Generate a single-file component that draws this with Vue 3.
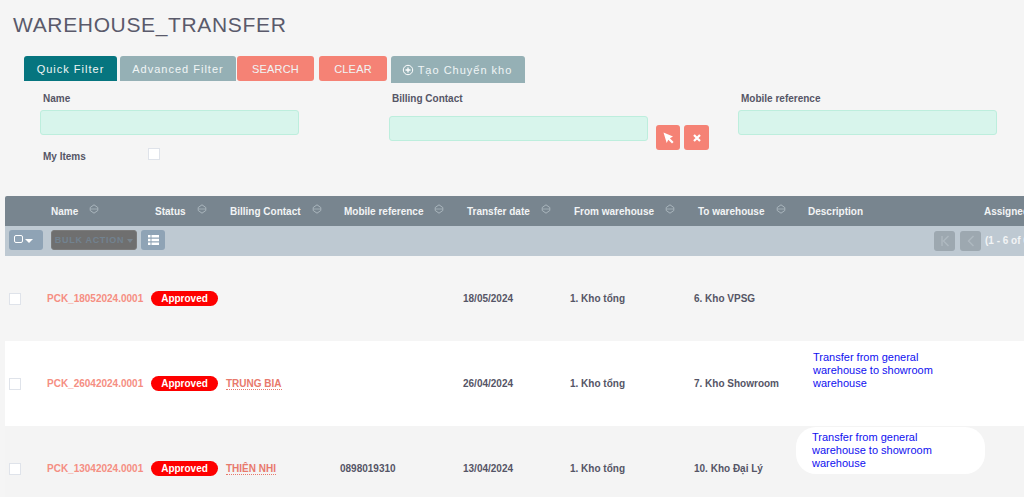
<template>
  <div class="page">
    <h1 class="title">WAREHOUSE_TRANSFER</h1>

    <div class="tabs">
      <a class="tab teal quick">Quick Filter</a>
      <a class="tab grey advanced">Advanced Filter</a>
      <a class="tab salmon search">SEARCH</a>
      <a class="tab salmon clear">CLEAR</a>
      <a class="tab grey create">
        <svg width="12" height="12" viewBox="0 0 12 12">
          <circle cx="6" cy="6" r="4.7" fill="none" stroke="#fff" stroke-width="1" />
          <path d="M6 3.5v5M3.5 6h5" stroke="#fff" stroke-width="1.3" />
        </svg>
        Tạo Chuyển kho
      </a>
    </div>

    <div class="filters">
      <div class="field">
        <label>Name</label>
        <input type="text" />
        <div class="my-items">
          <label>My Items</label>
          <span class="check"></span>
        </div>
      </div>
      <div class="field">
        <label>Billing Contact</label>
        <div class="contact-row">
          <input type="text" />
          <button class="mini">
            <svg width="14" height="14" viewBox="0 0 14 14"><path d="M2.5 1.5 12 5.6 8.9 7.2 12.6 11l-1.6 1.6-3.7-3.8-1.6 3.2z" fill="#fff" /></svg>
          </button>
          <button class="mini">
            <svg width="10" height="10" viewBox="0 0 10 10"><path d="M2 2l6 6M8 2l-6 6" stroke="#fff" stroke-width="2.2" /></svg>
          </button>
        </div>
      </div>
      <div class="field">
        <label>Mobile reference</label>
        <input type="text" />
      </div>
    </div>

    <div class="table">
      <div class="head cols">
        <div v-for="c in columns" :key="c.label" class="th" :class="{ pull: c.pull }">
          {{ c.label }}
          <svg v-if="c.sort" class="sort" width="10" height="10" viewBox="0 0 10 10">
            <path d="M5 .8 8.8 3.5v3L5 9.2 1.2 6.5v-3z" fill="none" stroke="#aab6bd" stroke-width="1" />
            <path d="M1.5 5h7" stroke="#aab6bd" stroke-width="0.8" />
          </svg>
        </div>
      </div>

      <div class="toolbar">
        <button class="tool select">
          <span class="box"></span>
          <span class="caret"></span>
        </button>
        <button class="tool bulk">BULK ACTION<span class="caret dim"></span></button>
        <button class="tool list">
          <svg width="11" height="10" viewBox="0 0 11 10">
            <path d="M0 0h2.5v2.5H0zM3.5 0H11v2.5H3.5zM0 3.7h2.5v2.6H0zM3.5 3.7H11v2.6H3.5zM0 7.5h2.5V10H0zM3.5 7.5H11V10H3.5z" fill="#fff" />
          </svg>
        </button>
        <div class="pager">
          <button class="tool page-btn">
            <svg width="10" height="12" viewBox="0 0 10 12"><path d="M2 1v10M8.5 1 3.5 6l5 5" fill="none" stroke="#afb9c0" stroke-width="1.4" /></svg>
          </button>
          <button class="tool page-btn">
            <svg width="8" height="12" viewBox="0 0 8 12"><path d="M6.5 1 1.5 6l5 5" fill="none" stroke="#afb9c0" stroke-width="1.4" /></svg>
          </button>
          <span class="count">(1 - 6 of 6)</span>
        </div>
      </div>

      <div v-for="r in rows" :key="r.name" class="row cols" :class="r.tone">
        <div class="td"><span class="check"></span></div>
        <div class="td name">{{ r.name }}</div>
        <div class="td"><span class="pill">Approved</span></div>
        <div class="td"><span v-if="r.contact" class="contact-link">{{ r.contact }}</span></div>
        <div class="td">{{ r.mobile }}</div>
        <div class="td">{{ r.date }}</div>
        <div class="td">{{ r.from }}</div>
        <div class="td">{{ r.to }}</div>
        <div class="td desc" :class="r.descClass">
          <div v-if="r.desc" class="desc-text">{{ r.desc }}</div>
        </div>
        <div class="td"></div>
      </div>
    </div>
  </div>
</template>

<script setup>
const columns = [
  { label: '', sort: false },
  { label: 'Name', sort: true },
  { label: 'Status', sort: true },
  { label: 'Billing Contact', sort: true },
  { label: 'Mobile reference', sort: true },
  { label: 'Transfer date', sort: true },
  { label: 'From warehouse', sort: true },
  { label: 'To warehouse', sort: true },
  { label: 'Description', sort: false, pull: true },
  { label: 'Assigned to', sort: false }
]

const DESC = 'Transfer from general warehouse to showroom warehouse'

const rows = [
  { name: 'PCK_18052024.0001', contact: '', mobile: '', date: '18/05/2024', from: '1. Kho tổng', to: '6. Kho VPSG', desc: '', tone: 'plain' },
  { name: 'PCK_26042024.0001', contact: 'TRUNG BIA', mobile: '', date: '26/04/2024', from: '1. Kho tổng', to: '7. Kho Showroom', desc: DESC, tone: 'white', descClass: 'flat' },
  { name: 'PCK_13042024.0001', contact: 'THIÊN NHI', mobile: '0898019310', date: '13/04/2024', from: '1. Kho tổng', to: '10. Kho Đại Lý', desc: DESC, tone: 'soft', descClass: 'bubble' }
]
</script>

<style>
html, body { background: #f5f5f5; overflow: hidden; }
</style>

<style scoped>
.page {
  width: 1024px;
  height: 497px;
  overflow: hidden;
  background: #f5f5f5;
  font-family: "Liberation Sans", Arial, "Noto Sans", sans-serif;
  color: #555566;
}
.title {
  margin: 0;
  padding: 12px 0 0 13px;
  height: 43px;
  box-sizing: border-box;
  font-size: 21px;
  line-height: 26px;
  font-weight: 400;
  letter-spacing: 0.65px;
  color: #5a5a6b;
}

.tabs { display: flex; align-items: flex-start; padding-left: 24px; height: 45px; margin-top: 13px; }
.tab {
  height: 25px;
  box-sizing: border-box;
  display: flex;
  align-items: center;
  justify-content: center;
  gap: 4px;
  font-size: 11px;
  letter-spacing: 1px;
  color: #f0f5f5;
  border-radius: 3px 3px 0 0;
}
.teal { background: #06757f; }
.grey { background: #95b0b5; }
.salmon { background: #f58275; border-radius: 3px; letter-spacing: 0.2px; }
.quick { width: 93px; }
.advanced { width: 116px; margin-left: 3px; }
.search { width: 77px; margin-left: 1px; }
.clear { width: 68px; margin-left: 5px; }
.create { width: 134px; height: 27px; margin-left: 4px; padding-right: 2px; }

.filters {
  display: grid;
  grid-template-columns: repeat(3, 349px);
  padding-left: 40px;
  height: 95px;
  margin-top: -9px;
}
.field label {
  display: block;
  height: 18px;
  padding-left: 3px;
  font-size: 10px;
  line-height: 14px;
  font-weight: 700;
}
.field input {
  display: block;
  width: 259px;
  height: 25px;
  box-sizing: border-box;
  background: #d8f5ec;
  border: 1px solid #bdeedd;
  border-radius: 3px;
  padding: 0;
  outline: none;
}
.contact-row { display: flex; align-items: flex-start; padding-top: 6px; }
.mini {
  width: 24px;
  height: 25px;
  margin-top: 9px;
  padding: 0;
  border: 0;
  border-radius: 3px;
  background: #f58275;
  display: flex;
  align-items: center;
  justify-content: center;
}
.contact-row input + .mini { margin-left: 8px; }
.mini + .mini { margin-left: 4px; width: 25px; }
.my-items { display: flex; align-items: center; margin-top: 12px; height: 14px; }
.my-items label { width: 105px; height: 14px; margin-top: 6px; }
.check {
  display: block;
  width: 12px;
  height: 12px;
  box-sizing: border-box;
  background: #fff;
  border: 1px solid #dfe3ea;
}

.table { margin-left: 5px; width: 1100px; margin-top: 9px; }
.cols {
  display: grid;
  grid-template-columns: 42px 104px 75px 114px 123px 107px 124px 114px 172px 125px;
}
.head {
  height: 30px;
  background: #78858f;
  align-items: center;
  border-radius: 2px 0 0 0;
}
.th {
  display: flex;
  align-items: center;
  gap: 11px;
  padding: 0 0 0 4px;
  font-size: 10px;
  font-weight: 700;
  color: #f2f4f5;
  white-space: nowrap;
}
.th.pull { padding-left: 0; }
.sort { margin-top: -5px; }

.toolbar {
  height: 30px;
  background: #bec9d2;
  display: flex;
  align-items: flex-start;
  padding: 4px 0 0 4px;
  box-sizing: border-box;
  width: 1019px;
}
.tool {
  height: 20px;
  padding: 0;
  border: 0;
  border-radius: 3px;
  background: #8fa3b5;
  display: flex;
  align-items: center;
  justify-content: center;
  font-family: inherit;
  flex-shrink: 0;
}
.select { width: 34px; gap: 2px; justify-content: flex-start; padding-left: 5px; box-sizing: border-box; }
.box { box-sizing: border-box; width: 9px; height: 8px; border: 1.8px solid #fff; border-radius: 2px; margin-top: -3px; }
.caret { width: 0; height: 0; border-left: 4px solid transparent; border-right: 4px solid transparent; border-top: 4px solid #fff; margin-top: 2px; }
.caret.dim { border-top-color: #78858f; border-left-width: 3px; border-right-width: 3px; margin-left: 3px; }
.bulk {
  width: 86px;
  margin-left: 8px;
  background: #6f6f6f;
  color: #72828f;
  font-size: 9px;
  font-weight: 700;
  letter-spacing: 0.7px;
  white-space: nowrap;
  border: 1px solid #7b7b7b;
}
.list { width: 24px; margin-left: 4px; }
.pager { margin-left: auto; display: flex; align-items: flex-start; gap: 5px; margin-top: 1px; width: 90px; white-space: nowrap; }
.page-btn { width: 21px; background: #9da8b0; }
.count { font-size: 10px; font-weight: 700; color: #f2f4f5; line-height: 20px; white-space: nowrap; margin-left: -1px; }

.row { height: 85px; align-items: center; }
.plain { background: #f5f5f5; }
.white { background: #fff; }
.soft { background: #f4f4f4; }
.td { font-size: 10px; font-weight: 700; color: #555566; white-space: nowrap; }
.td .check { margin-left: 4px; }
.name { color: #f58e82; }
.pill {
  display: block;
  width: 67px;
  height: 15px;
  border-radius: 8px;
  background: #fe0000;
  color: #fff;
  text-align: center;
  font-size: 10px;
  line-height: 15px;
}
.contact-link {
  color: #e8796c;
  border-bottom: 1px dotted #e8796c;
}
.desc { align-self: start; white-space: normal; font-weight: 400; }
.desc-text {
  width: 125px;
  font-size: 11px;
  line-height: 13px;
  color: #1010f0;
}
.flat { padding: 10px 0 0 5px; }
.bubble {
  margin: 1px 0 0 -12px;
  width: 189px;
  height: 47px;
  box-sizing: border-box;
  background: #fff;
  border-radius: 20px;
  padding: 4px 0 0 16px;
}
</style>
